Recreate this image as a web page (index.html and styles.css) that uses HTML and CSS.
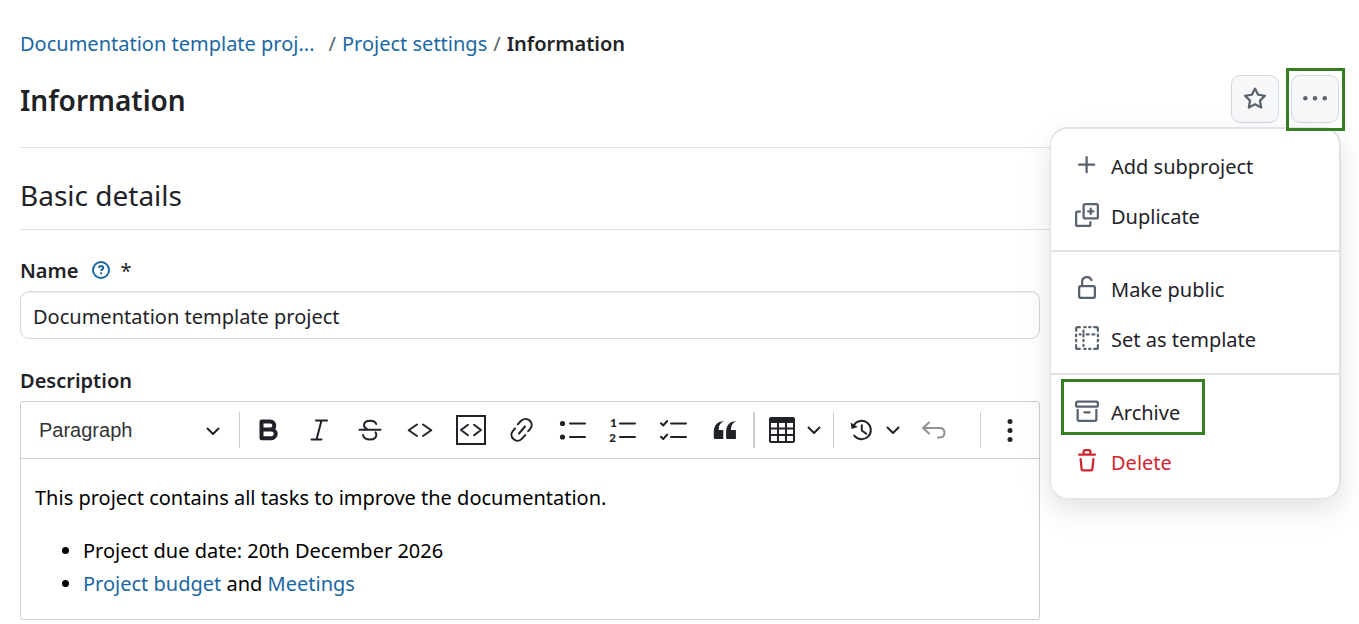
FILE: index.html
```html
<!DOCTYPE html>
<html lang="en">
<head>
<meta charset="utf-8">
<meta name="viewport" content="width=device-width, initial-scale=1">
<title>Information - Project settings</title>
<link rel="stylesheet" href="styles.css">
</head>
<body>
<main class="page">
  <nav class="breadcrumb" aria-label="Breadcrumb">
    <a class="crumb-project" href="#">Documentation template proj...</a>
    <span class="slash">/</span>
    <a href="#">Project settings</a>
    <span class="slash">/</span>
    <span class="current" aria-current="page">Information</span>
  </nav>

  <header class="title-row">
    <h1>Information</h1>
    <div class="actions">
      <button class="square-btn" type="button" aria-label="Add to favorites">
        <svg class="icon-24 fill" viewBox="0 0 16 16"><path d="M8 .25a.75.75 0 0 1 .673.418l1.882 3.815 4.21.612a.75.75 0 0 1 .416 1.279l-3.046 2.97.719 4.192a.751.751 0 0 1-1.088.791L8 12.347l-3.766 1.98a.75.75 0 0 1-1.088-.79l.72-4.194L.818 6.374a.75.75 0 0 1 .416-1.28l4.21-.611L7.327.668A.75.75 0 0 1 8 .25Zm0 2.445L6.615 5.5a.75.75 0 0 1-.564.41l-3.097.45 2.24 2.184a.75.75 0 0 1 .216.664l-.528 3.084 2.769-1.456a.75.75 0 0 1 .698 0l2.77 1.456-.53-3.084a.75.75 0 0 1 .216-.664l2.24-2.183-3.096-.45a.75.75 0 0 1-.564-.41L8 2.694Z"/></svg>
      </button>
      <div class="more">
        <button class="square-btn" type="button" aria-label="More" aria-haspopup="menu" aria-expanded="true">
          <svg class="icon-24 fill" viewBox="0 0 24 24"><circle cx="2.3" cy="11.3" r="2.2"/><circle cx="12" cy="11.3" r="2.2"/><circle cx="21.8" cy="11.3" r="2.2"/></svg>
        </button>
        <div class="menu" role="menu">
          <div class="menu-group">
            <button class="menu-item" type="button" role="menuitem">
              <svg class="icon-24 fill" viewBox="0 0 16 16"><path d="M7.75 2a.75.75 0 0 1 .75.75V7h4.25a.75.75 0 0 1 0 1.5H8.5v4.25a.75.75 0 0 1-1.5 0V8.5H2.75a.75.75 0 0 1 0-1.5H7V2.75A.75.75 0 0 1 7.75 2Z"/></svg>
              <span>Add subproject</span>
            </button>
            <button class="menu-item" type="button" role="menuitem">
              <svg class="icon-24 line" viewBox="0 0 16 16"><rect x="5.75" y=".75" width="9.5" height="9.5" rx="1"/><path d="M10.5 3.75v3.5M8.75 5.5h3.5M3.25 5.75h-1.5a1 1 0 0 0-1 1v7.5a1 1 0 0 0 1 1h7.5a1 1 0 0 0 1-1v-1.5"/></svg>
              <span>Duplicate</span>
            </button>
          </div>
          <div class="menu-group">
            <button class="menu-item" type="button" role="menuitem">
              <svg class="icon-24 line" viewBox="0 0 16 16"><rect x="2.75" y="6.75" width="10.5" height="7.75" rx="1"/><path d="M4.75 6.5V4A3.25 3.25 0 0 1 11 2.7"/></svg>
              <span>Make public</span>
            </button>
            <button class="menu-item" type="button" role="menuitem">
              <svg class="icon-24 line" viewBox="0 0 16 16"><path d="M.75 3.2V1.75a1 1 0 0 1 1-1H3.2M6.2.75h.9M9.4.75h.9M12.8.75h1.45a1 1 0 0 1 1 1V3.2M15.25 5.8v1M15.25 9.2v1M15.25 12.8v1.45a1 1 0 0 1-1 1H12.8M10.3 15.25h-.9M7.1 15.25h-.9M3.2 15.25H1.75a1 1 0 0 1-1-1V12.8M.75 10.2v-1M.75 6.8v-1M5.65 3.1v1M3.1 5.65h.6M5.65 5.65v1.3M7.8 5.65h1.3M11.6 5.65h1.3M5.65 9.3v.8M5.65 12.5v.8"/></svg>
              <span>Set as template</span>
            </button>
          </div>
          <div class="menu-group">
            <button class="menu-item highlighted" type="button" role="menuitem">
              <svg class="icon-24 line" viewBox="0 0 16 16"><rect x=".75" y="1.75" width="14.5" height="3.4" rx="1"/><path d="M1.75 7.2v6.3a1 1 0 0 0 1 1h10.5a1 1 0 0 0 1-1V7.2M6.25 8.9h3.5"/></svg>
              <span>Archive</span>
            </button>
            <button class="menu-item danger" type="button" role="menuitem">
              <svg class="icon-24 fill" viewBox="0 0 16 16"><path d="M11 1.75V3h2.25a.75.75 0 0 1 0 1.5H2.75a.75.75 0 0 1 0-1.5H5V1.75C5 .784 5.784 0 6.75 0h2.5C10.216 0 11 .784 11 1.75ZM4.496 6.675l.66 6.6a.25.25 0 0 0 .249.225h5.19a.25.25 0 0 0 .249-.225l.66-6.6a.75.75 0 0 1 1.492.149l-.66 6.6A1.748 1.748 0 0 1 10.595 15h-5.19a1.75 1.75 0 0 1-1.741-1.575l-.66-6.6a.75.75 0 1 1 1.492-.15ZM6.5 1.75V3h3V1.75a.25.25 0 0 0-.25-.25h-2.5a.25.25 0 0 0-.25.25Z"/></svg>
              <span>Delete</span>
            </button>
          </div>
        </div>
      </div>
    </div>
  </header>

  <h2>Basic details</h2>

  <form class="form">
    <div class="label-row">
      <label for="name">Name</label>
      <a class="help" href="#" aria-label="Help">
        <svg class="icon-help" viewBox="0 0 18 18"><circle cx="9" cy="9" r="8"/><path d="M6.9 6.9c.2-1.2 1.1-1.8 2.2-1.8 1.200 0 2.100.7 2.100 1.800 0 1.400-2.100 1.500-2.100 3"/><circle class="dot" cx="9.100" cy="12.400" r="1.100"/></svg>
      </a>
      <span class="required">*</span>
    </div>
    <input class="text-input" id="name" type="text" value="Documentation template project">

    <div class="label-row description-label"><span id="description-label">Description</span></div>
    <div class="editor">
      <div class="toolbar" role="toolbar" aria-label="Editor toolbar">
        <div class="style-select">
          <select aria-label="Heading"><option>Paragraph</option><option>Heading 1</option></select>
          <svg class="chevron" viewBox="0 0 14 14"><path d="M1.500 4.500 7 10l5.500-5.500"/></svg>
        </div>
        <span class="sep"></span>
        <div class="tools">
          <button type="button" aria-label="Bold"><svg class="icon-30 tool" viewBox="0 0 30 30"><path class="heavy" d="M8.500 6.600h8.800a3.900 3.900 0 0 1 0 8H8.500zM8.500 14.600h9.900a4.100 4.100 0 0 1 0 8.600H8.500z"/></svg></button>
          <button type="button" aria-label="Italic"><svg class="icon-30 tool" viewBox="0 0 30 30"><path d="M12 5.500h11M7.500 24.500h10M17.500 5.500l-5 19"/></svg></button>
          <button type="button" aria-label="Strikethrough"><svg class="icon-30 tool" viewBox="0 0 30 30"><path d="M4.500 14.800h21M21.200 9c-.7-2.300-3-3.300-6-3.300-3.800 0-6.200 1.700-6.200 4.400 0 1.800 1 3 3 4M8 20c.8 3 3.500 4.600 7 4.600 3.900 0 6.300-1.800 6.300-4.800 0-1-.2-1.800-.7-2.500"/></svg></button>
          <button type="button" aria-label="Code"><svg class="icon-30 tool" viewBox="0 0 30 30"><path d="m12 9.500-8.300 5.800L12 21M18 9.500l8.300 5.800L18 21"/></svg></button>
          <button type="button" aria-label="Insert code snippet"><svg class="icon-30 tool" viewBox="0 0 30 30"><rect class="thin" x="1" y="1" width="28" height="28"/><path d="m12 9.800-7 5.200 7 5.200M18 9.800l7 5.200-7 5.200"/></svg></button>
          <button type="button" aria-label="Link"><svg class="icon-30 tool" viewBox="0 0 30 30"><path d="m12 18.500 6-7M10.800 9.300l3-3.300c2.700-2.800 6.300-2.700 8.800-.4 2.700 2.500 2.800 5.900.4 8.600l-1.800 2M8 13.500l-2 2.300c-2.300 2.700-2 6 .5 8.300 2.600 2.300 6 2.200 8.500-.5l3.200-3.500"/></svg></button>
          <button type="button" aria-label="Bulleted list"><svg class="icon-30 tool" viewBox="0 0 30 30"><circle class="solid" cx="4.500" cy="8.500" r="2.600"/><circle class="solid" cx="4.500" cy="22" r="2.600"/><path d="M12 8.500h15M12 22h15"/></svg></button>
          <button type="button" aria-label="Numbered list"><svg class="icon-30 tool" viewBox="0 0 30 30"><text class="digit" x="2" y="12">1</text><text class="digit" x="1" y="27">2</text><path d="M12 8.500h15M12 22h15"/></svg></button>
          <button type="button" aria-label="To-do list"><svg class="icon-30 tool" viewBox="0 0 30 30"><path d="m2 8.300 2.200 2.200 4-4.500M2 21.800 4.200 24l4-4.500M12 8.500h15M12 22h15"/></svg></button>
          <button type="button" aria-label="Block quote"><svg class="icon-30 tool" viewBox="0 0 30 30"><path class="solid" d="M14 6.300C10.500 7.500 8.700 10.500 8.600 15h4.700v9H5c-.7 0-1.200-.5-1.200-1.200V17C3.800 10.500 7.500 6 14 6.300ZM26.300 6.300c-3.500 1.200-5.300 4.200-5.400 8.700h5v9h-8.600c-.7 0-1.200-.5-1.200-1.200V17c0-6.500 3.700-11 10.200-10.700Z"/></svg></button>
        </div>
        <span class="sep wide"></span>
        <div class="split">
          <button type="button" aria-label="Insert table"><svg class="icon-30 tool" viewBox="0 0 30 30"><path class="thin" d="M3 4.500h24v21.500a1 1 0 0 1-1 1H4a1 1 0 0 1-1-1zM3 13.500h24M3 20h24M11 8v19M19 8v19"/><path class="solid" d="M2 8V4a2 2 0 0 1 2-2h22a2 2 0 0 1 2 2v4z"/></svg></button>
          <button class="arrow" type="button" aria-label="Table options"><svg class="chevron" viewBox="0 0 14 14"><path d="M1.500 4.500 7 10l5.500-5.500"/></svg></button>
        </div>
        <span class="sep"></span>
        <div class="split">
          <button type="button" aria-label="Revision history"><svg class="icon-30 tool" viewBox="0 0 30 30"><path d="M7.600 10.500a9.200 9.200 0 1 1 .6 10M15.800 10.300v5.200l4.500 3.300"/><path class="solid" d="m4.600 7.400 1 6.600 6.200-2z"/></svg></button>
          <button class="arrow" type="button" aria-label="History options"><svg class="chevron" viewBox="0 0 14 14"><path d="M1.500 4.500 7 10l5.500-5.500"/></svg></button>
        </div>
        <button class="undo" type="button" aria-label="Undo" disabled><svg class="icon-30 tool" viewBox="0 0 30 30"><path d="M10 7.500 4 13l6 5.500M4 13h16.500c3 0 5 1.800 5 4.800s-2 4.700-5 4.700h-1.500"/></svg></button>
        <span class="sep last"></span>
        <button class="undo" type="button" aria-label="Show more items"><svg class="icon-30 tool" viewBox="0 0 30 30"><circle class="solid" cx="15" cy="6.500" r="2.500"/><circle class="solid" cx="15" cy="15.500" r="2.500"/><circle class="solid" cx="15" cy="24.500" r="2.500"/></svg></button>
      </div>
      <div class="content" role="textbox" aria-multiline="true" aria-labelledby="description-label" contenteditable="true" spellcheck="false">
        <p>This project contains all tasks to improve the documentation.</p>
        <ul>
          <li>Project due date: 20th December 2026</li>
          <li><a href="#">Project budget</a> and <a href="#">Meetings</a></li>
        </ul>
      </div>
    </div>
  </form>
</main>
</body>
</html>
```

FILE: styles.css
```css
* { box-sizing: border-box; }

body {
  margin: 0;
  background: #fff;
  color: #1f2328;
  font: 20px/32px "Noto Sans", "Open Sans", sans-serif;
}

a { color: #1a67a3; text-decoration: none; }

button, input, select { font: inherit; color: inherit; margin: 0; }

button { border: 0; padding: 0; background: none; }

svg { display: block; flex: none; }

.page { padding: 28px 20px 4px; }

.breadcrumb { display: flex; gap: 6px; white-space: nowrap; }
.crumb-project { margin-right: 8px; }
.slash { color: #59636e; }
.current { font-weight: 600; }

.title-row {
  display: flex;
  justify-content: space-between;
  align-items: flex-start;
  padding: 15px 0 22px;
  border-bottom: 1px solid #dfe2e5;
}

h1 { margin: 0; font-size: 28px; line-height: 50px; font-weight: 600; }

h2 {
  margin: 0;
  padding: 27px 0 13px;
  border-bottom: 1px solid #dfe2e5;
  font-size: 28px;
  line-height: 41px;
  font-weight: 400;
}

.actions { display: flex; gap: 12px; }

.square-btn {
  display: flex;
  align-items: center;
  justify-content: center;
  width: 48px;
  height: 48px;
  border: 1px solid #d1d9e0;
  border-radius: 9px;
  background: #f6f8fa;
  color: #59636e;
}

.icon-24 { width: 24px; height: 24px; }
.fill { fill: currentColor; }
.line { fill: none; stroke: currentColor; stroke-width: 1.5; stroke-linecap: round; stroke-linejoin: round; }

.more { position: relative; }

.more::after {
  content: "";
  position: absolute;
  inset: -7px -6px -8px -5px;
  border: 3px solid #377e22;
  pointer-events: none;
}

.menu {
  position: absolute;
  top: 52px;
  right: -2px;
  width: 291px;
  border: 1px solid #dfe3e8;
  border-top-width: 2px;
  border-right-width: 2px;
  border-radius: 18px;
  background: #fff;
  box-shadow: 0 9px 18px rgba(37, 41, 46, .06), 0 12px 36px rgba(37, 41, 46, .08);
}

.menu-group { padding: 11px 10px 10px; }
.menu-group + .menu-group { border-top: 2px solid #dfe3e8; }
.menu-group:last-child { padding-bottom: 12px; }

.menu-item {
  position: relative;
  display: flex;
  align-items: center;
  gap: 12px;
  width: 100%;
  height: 50px;
  padding: 0 14px;
}

.menu-item svg { color: #59636e; }
.menu-item span { padding-top: 4px; }
.menu-item.danger, .menu-item.danger svg { color: #d1242f; }

.highlighted::after {
  content: "";
  position: absolute;
  inset: -7px 124px 1px 0;
  border: 3px solid #377e22;
}

.form { width: calc(100% - 299px); padding-top: 25px; }

.label-row { display: flex; align-items: center; font-weight: 600; }
.help { margin: 0 10px 2px 14px; }
.icon-help { width: 18px; height: 18px; fill: none; stroke: #1a67a3; stroke-width: 2; }
.icon-help .dot { fill: #1a67a3; stroke: none; }
.required { font-weight: 400; }

.text-input {
  display: block;
  width: 100%;
  height: 48px;
  margin-top: 4px;
  padding: 2px 12px 0;
  border: 1px solid #d1d9e0;
  border-radius: 9px;
  background: #fff;
  box-shadow: inset 0 1px 0 #f0f2f4;
}

.description-label { padding-top: 26px; }

.editor { margin-top: 4px; border: 1px solid #ccced1; border-radius: 3px; }

.toolbar {
  display: flex;
  align-items: center;
  gap: 7px;
  height: 57px;
  padding: 0 7px;
  border-bottom: 1px solid #ccced1;
}

.toolbar button { display: flex; align-items: center; justify-content: center; width: 42px; height: 45px; }
.toolbar .split button { width: 40px; }
.toolbar .split .arrow { width: 24px; }
.toolbar .undo { width: 44px; }
.toolbar .undo:disabled { color: #8f9193; }

.style-select { position: relative; width: 204px; }

.style-select select {
  width: 100%;
  height: 45px;
  padding: 0 11px;
  border: 0;
  background: none;
  appearance: none;
  color: #333;
  font: 20px/45px "Liberation Sans", Arial, sans-serif;
}

.style-select .chevron { position: absolute; top: 16px; right: 12px; pointer-events: none; }

.chevron { width: 14px; height: 14px; fill: none; stroke: #1f2328; stroke-width: 2; stroke-linecap: round; stroke-linejoin: round; }

.sep { width: 1px; height: 36px; background: #ccced1; }
.sep.wide { width: 2px; }
.sep.last { margin-left: auto; }

.tools { display: flex; justify-content: space-between; width: 499px; }
.split { display: flex; }

.icon-30 { width: 30px; height: 30px; }
.tool { fill: none; stroke: currentColor; stroke-width: 2; stroke-linecap: round; stroke-linejoin: round; }
.tool .solid { fill: currentColor; stroke: none; }
.tool .heavy { stroke-width: 4; }
.tool .thin { stroke-width: 2; stroke-linejoin: miter; }
.digit { fill: currentColor; stroke: none; font: 900 12px "Lato", sans-serif; }

.content { padding: 22px 14px 19px; color: #000; outline: 0; }
.content p { margin: 0 0 20px; line-height: 33px; }
.content ul { margin: 0; padding-left: 48px; line-height: 33px; }
```
